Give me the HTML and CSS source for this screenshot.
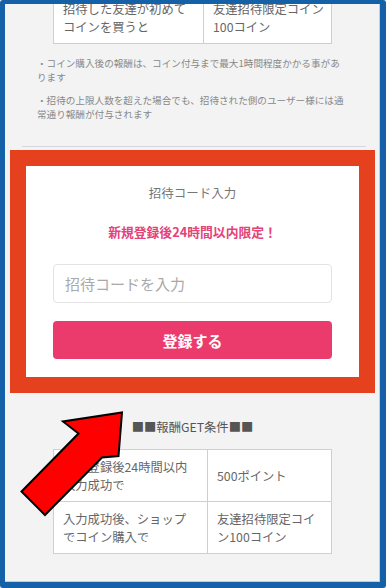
FILE: index.html
```html
<!DOCTYPE html>
<html lang="ja">
<head>
<meta charset="utf-8">
<title>招待コード入力</title>
<link rel="stylesheet" href="styles.css">
</head>
<body>
<div class="frame">
  <div class="page">
    <table class="reward reward-top">
      <tr>
        <td class="col-a">招待した友達が初めて<br>コインを買うと</td>
        <td class="col-b">友達招待限定コイン<br>100コイン</td>
      </tr>
    </table>
    <div class="notes">
      <p class="note">・コイン購入後の報酬は、コイン付与まで最大1時間程度かかる事があります</p>
      <p class="note note-second">・招待の上限人数を超えた場合でも、招待された側のユーザー様には通常通り報酬が付与されます</p>
    </div>
    <hr class="divider">
    <div class="highlight">
      <section class="card">
        <h2 class="card-title">招待コード入力</h2>
        <p class="limit">新規登録後24時間以内限定！</p>
        <input class="code-input" type="text" placeholder="招待コードを入力">
        <button class="submit" type="button">登録する</button>
      </section>
    </div>
    <h3 class="cond-title">■■報酬GET条件■■</h3>
    <table class="reward reward-bottom">
      <tr>
        <td class="col-a">新規登録後24時間以内<br>入力成功で</td>
        <td class="col-b">500ポイント</td>
      </tr>
      <tr>
        <td class="col-a">入力成功後、ショップ<br>でコイン購入で</td>
        <td class="col-b">友達招待限定コイ<br>ン100コイン</td>
      </tr>
    </table>
  </div>
</div>
<svg class="arrow" width="386" height="588" viewBox="0 0 386 588" aria-hidden="true">
  <polygon points="122,412.5 118.5,456 102,457.5 45,515 21.5,491.5 78.5,433.5 63,421.5" fill="#ff0000" stroke="#000" stroke-width="2" stroke-linejoin="miter"/>
</svg>
</body>
</html>
```
FILE: styles.css
```css
html, body {
  margin: 0;
  padding: 0;
}
body {
  position: relative;
  width: 386px;
  height: 588px;
  overflow: hidden;
  font-family: "Noto Sans CJK JP", "Noto Sans", sans-serif;
  background: #f3f3f3;
}
.frame {
  box-sizing: border-box;
  width: 386px;
  height: 588px;
  border-style: solid;
  border-color: #1461a8;
  border-width: 4px 6px 6px 5px;
  border-radius: 3px;
  background: #f3f3f3;
  overflow: hidden;
  box-shadow: inset -1px -1px 0 #a9d6ef;
}
.page {
  display: flex;
  flex-direction: column;
}
.reward {
  border-collapse: collapse;
  width: 279px;
  margin: 0 auto;
  background: #fff;
  table-layout: fixed;
}
.reward td {
  border: 1px solid #cfcfcf;
  font-size: 12.3px;
  line-height: 18px;
  color: #666;
  padding: 7px 9px;
  white-space: nowrap;
  vertical-align: middle;
}
.reward-top {
  margin-top: -12px;
}
.reward-top .col-a {
  width: 131px;
}
.reward-bottom .col-a {
  width: 135px;
}
.reward-bottom td {
  padding: 8px 9px 7px;
}
.notes {
  margin-top: 12px;
  padding-left: 32px;
  width: 310px;
}
.note {
  margin: 0;
  font-size: 9.6px;
  line-height: 14px;
  color: #888;
}
.note-second {
  margin-top: 9px;
}
.divider {
  margin: 25px 14px 0 17px;
  border: 0;
  height: 1px;
  background: #d6d6df;
}
.highlight {
  margin: 3px 0 0 5px;
  width: 365px;
  box-sizing: border-box;
  border: 16px solid #e6411f;
}
.card {
  background: #fff;
  padding: 18px 27px 18px;
  display: flex;
  flex-direction: column;
  align-items: center;
}
.card-title {
  margin: 0;
  font-size: 12.5px;
  line-height: 18px;
  font-weight: normal;
  color: #777;
}
.limit {
  margin: 21px 0 0;
  font-size: 12.8px;
  line-height: 18px;
  font-weight: bold;
  color: #e3437a;
}
.code-input {
  box-sizing: border-box;
  margin-top: 23px;
  width: 279px;
  height: 39px;
  border: 1px solid #e3e3e3;
  border-radius: 4px;
  padding: 0 11px;
  font-family: inherit;
  font-size: 15px;
  color: #444;
  background: #fff;
  outline: none;
}
.code-input::placeholder {
  color: #a9a9a9;
}
.submit {
  margin-top: 18px;
  width: 279px;
  height: 38px;
  border: 0;
  border-radius: 4px;
  background: #eb3b6d;
  color: #fff;
  font-family: inherit;
  font-size: 15px;
  font-weight: bold;
  padding: 0;
}
.cond-title {
  margin: 25px 0 0;
  text-align: center;
  font-size: 12.3px;
  line-height: 18px;
  font-weight: normal;
  color: #555;
}
.reward-bottom {
  margin-top: 13px;
}
.arrow {
  position: absolute;
  left: 0;
  top: 0;
  pointer-events: none;
}
```
